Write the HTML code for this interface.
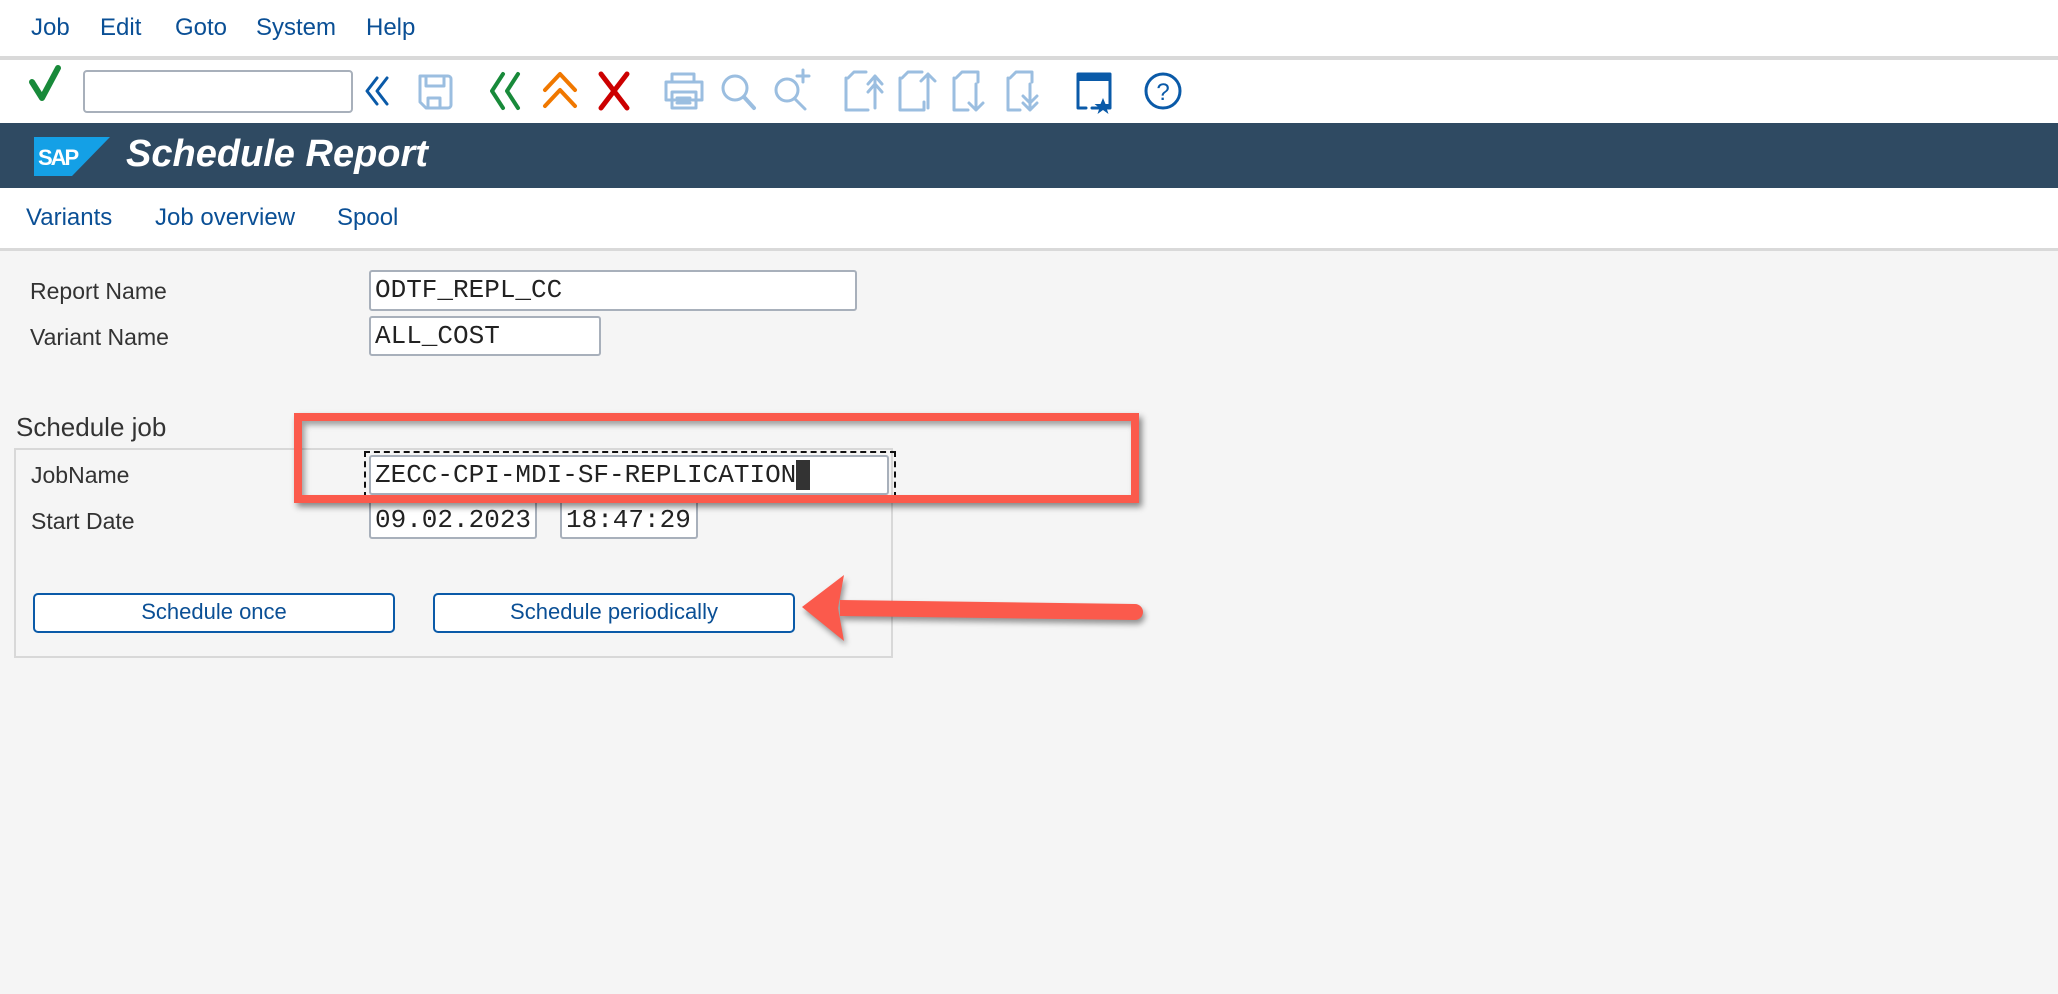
<!DOCTYPE html>
<html><head><meta charset="utf-8"><style>
*{margin:0;padding:0;box-sizing:border-box}
body{width:2058px;height:994px;background:#f5f5f5;font-family:"Liberation Sans",sans-serif;position:relative;overflow:hidden}
.abs{position:absolute}
.menu{left:0;top:0;width:2058px;height:56px;background:#fff}
.menu span{position:absolute;top:14px;font-size:24px;color:#0a4f95}
.sep{left:0;top:56px;width:2058px;height:4px;background:#d9d9d9}
.tb{left:0;top:60px;width:2058px;height:63px;background:#fff}
.hdr{left:0;top:123px;width:2058px;height:65px;background:#2f4a62}
.tabs{left:0;top:188px;width:2058px;height:60px;background:#fff}
.tabs span{position:absolute;top:16px;font-size:24px;color:#0a4f95}
.line2{left:0;top:248px;width:2058px;height:3px;background:#d9d9d9}
.lbl{font-size:23px;color:#333}
.inp{background:#fff;border:2px solid #a8b0bb;border-radius:3px;font-family:"Liberation Mono",monospace;font-size:26px;color:#222;padding-left:4px;line-height:36px}
.btn{border:2px solid #0a5aa8;border-radius:5px;background:#fff;color:#0a4f95;font-size:22px;text-align:center;line-height:34px}
</style></head><body>
<div class="abs menu"><span style="left:31px">Job</span><span style="left:100px">Edit</span><span style="left:175px">Goto</span><span style="left:256px">System</span><span style="left:366px">Help</span></div>
<div class="abs sep"></div>
<div class="abs tb"></div>
<svg class="abs" style="left:0;top:60px" width="1200" height="63" fill="none" stroke-linecap="round" stroke-linejoin="round">
<path d="M32 22 L42 38 L58 8" stroke="#188a3a" stroke-width="6"/>
<rect x="84" y="11" width="268" height="41" rx="3" fill="#fff" stroke="#a8b0bb" stroke-width="2"/>
<path d="M377 18 L367 31 L377 44 M387 18 L377 31 L387 44" stroke="#0a5aa8" stroke-width="3"/>
<path d="M420 16 h28 a3 3 0 0 1 3 3 v26 a3 3 0 0 1 -3 3 h-22 l-6 -6 z M426 16 v10 h18 v-10 M428 48 v-10 h12 v10" stroke="#9bbee0" stroke-width="3"/>
<path d="M503 14 L492 31 L503 48 M518 14 L507 31 L518 48" stroke="#188a3a" stroke-width="4"/>
<path d="M545 30 L560 14 L575 30 M545 46 L560 30 L575 46" stroke="#f07800" stroke-width="4"/>
<path d="M601 14 L627 48 M627 14 L601 48" stroke="#cc0000" stroke-width="5"/>
<path d="M672 22 v-8 h22 v8 M666 22 h36 v18 h-36 z M672 32 h24 v16 h-24 z M677 38 h13 M677 43 h13" stroke="#9bbee0" stroke-width="3"/>
<circle cx="735" cy="28" r="12" stroke="#9bbee0" stroke-width="3"/><path d="M744 37 L754 48" stroke="#9bbee0" stroke-width="4"/>
<circle cx="787" cy="30" r="11" stroke="#9bbee0" stroke-width="3"/><path d="M795 39 L805 49 M803 10 v12 M797 16 h12" stroke="#9bbee0" stroke-width="3"/>
<g stroke="#9bbee0" stroke-width="3">
<path d="M848 18 l6 -6 h12 M846 18 v32 h22"/><path d="M875 48 v-32 M868 24 l7 -8 7 8 M868 32 l7 -8 7 8"/>
<path d="M902 18 l6 -6 h14 M900 18 v32 h24 v-8 M928 48 v-34 M921 21 l7 -7 7 7"/>
<path d="M956 18 l6 -6 h16 v10 M954 18 v32 h14 M976 24 v26 M969 43 l7 7 7 -7"/>
<path d="M1010 18 l6 -6 h16 v10 M1008 18 v32 h12 M1030 24 v26 M1023 36 l7 7 7 -7 M1023 43 l7 7 7 -7"/>
</g>
<path d="M1078 14 h32 v34 h-18 M1078 14 v34 h8" stroke="#0a5aa8" stroke-width="3"/><rect x="1078" y="14" width="32" height="7" fill="#0a5aa8"/>
<path d="M1103 38 l2.5 6 6 0 -5 4 2 6 -5.5 -4 -5.5 4 2 -6 -5 -4 6 0z" fill="#0a5aa8"/>
<circle cx="1163" cy="31" r="17" stroke="#0a5aa8" stroke-width="3"/>
<text x="1163" y="40" text-anchor="middle" font-family="Liberation Sans" font-size="24" fill="#0a5aa8">?</text>
</svg>
<div class="abs hdr"></div>
<svg class="abs" style="left:34px;top:137px" width="80" height="40"><path d="M0 0 H76 L38 39 H0 Z" fill="#14a0e6"/><text x="4" y="28" font-family="Liberation Sans" font-weight="bold" font-size="22" fill="#fff" letter-spacing="-2">SAP</text></svg>
<div class="abs" style="left:126px;top:133px;font-size:38px;font-weight:bold;font-style:italic;color:#fff">Schedule Report</div>
<div class="abs tabs"><span style="left:26px">Variants</span><span style="left:155px">Job overview</span><span style="left:337px">Spool</span></div>
<div class="abs line2"></div>
<div class="abs lbl" style="left:30px;top:278px">Report Name</div>
<div class="abs inp" style="left:369px;top:270px;width:488px;height:41px">ODTF_REPL_CC</div>
<div class="abs lbl" style="left:30px;top:324px">Variant Name</div>
<div class="abs inp" style="left:369px;top:316px;width:232px;height:40px">ALL_COST</div>
<div class="abs" style="left:16px;top:412px;font-size:26px;color:#333">Schedule job</div>
<div class="abs" style="left:14px;top:448px;width:879px;height:210px;border:2px solid #d8d8d8"></div>
<div class="abs lbl" style="left:31px;top:462px">JobName</div>
<div class="abs" style="left:364px;top:451px;width:532px;height:47px;border:2px dashed #111"></div>
<div class="abs inp" style="left:369px;top:455px;width:520px;height:40px">ZECC-CPI-MDI-SF-REPLICATION<span style="display:inline-block;width:14px;height:30px;background:#333;vertical-align:middle"></span></div>
<div class="abs lbl" style="left:31px;top:508px">Start Date</div>
<div class="abs inp" style="left:369px;top:500px;width:168px;height:39px">09.02.2023</div>
<div class="abs inp" style="left:560px;top:500px;width:138px;height:39px">18:47:29</div>
<div class="abs btn" style="left:33px;top:593px;width:362px;height:40px">Schedule once</div>
<div class="abs btn" style="left:433px;top:593px;width:362px;height:40px">Schedule periodically</div>
<div class="abs" style="left:294px;top:413px;width:845px;height:90px;border:8px solid #fb5a4c;box-shadow:3px 4px 6px rgba(0,0,0,.45), inset 3px 4px 6px rgba(0,0,0,.35)"></div>
<svg class="abs" style="left:780px;top:565px" width="380" height="90"><g style="filter:drop-shadow(2px 4px 3px rgba(0,0,0,.4))"><path d="M60 35 L355 39 a8 8 0 0 1 0 16 L60 51 Z" fill="#fb5a4c"/><path d="M22 42 L64 10 L58 43 L64 76 Z" fill="#fb5a4c"/></g></svg>
</body></html>
